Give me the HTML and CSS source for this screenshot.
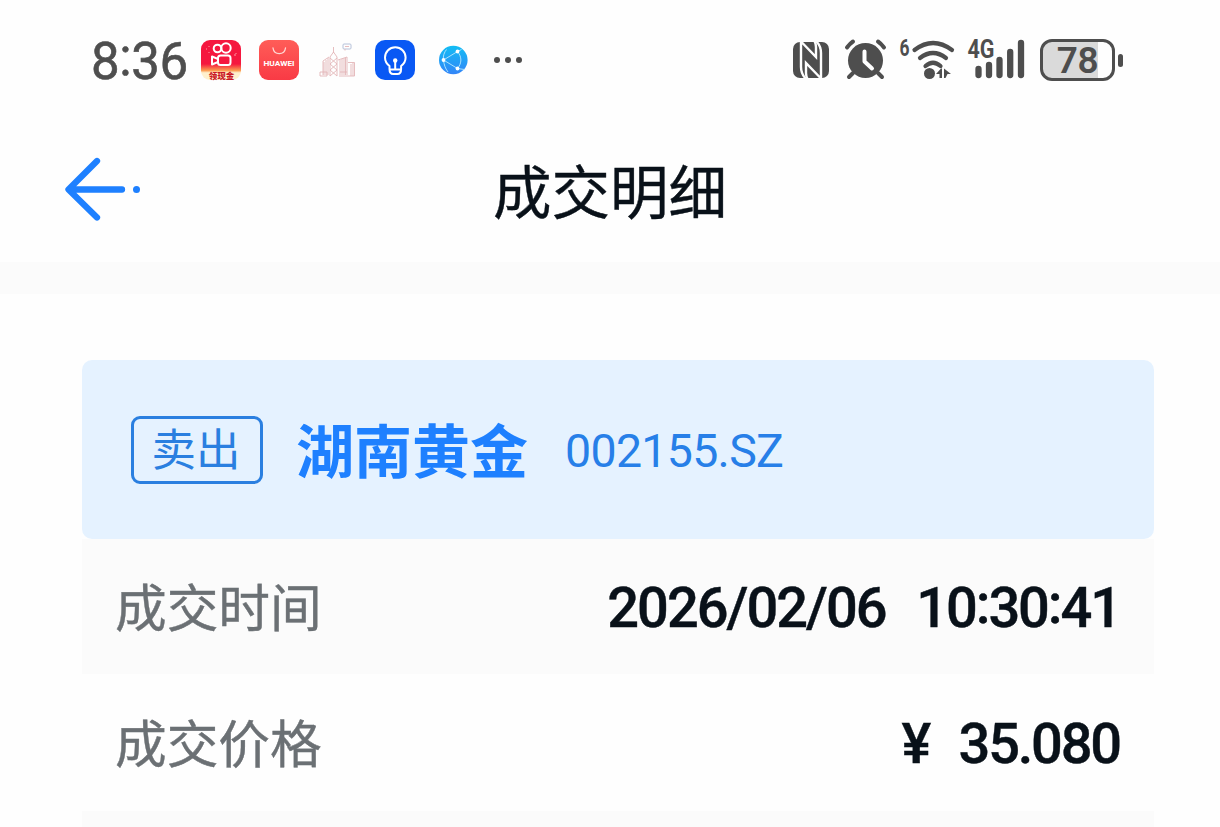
FILE: index.html
```html
<!DOCTYPE html>
<html lang="zh-CN">
<head>
    <meta charset="UTF-8">
    <meta name="viewport" content="width=device-width, initial-scale=1.0">
    <title>成交明细</title>
    <link rel="stylesheet" href="styles.css">
</head>
<body>
    <div class="status-bar">
        <div class="status-left">
            <span class="clock">8<i>:</i>36</span>
            <svg class="app-icon" viewBox="0 0 40 40">
                <defs>
                    <linearGradient id="kwai" x1="0" y1="0" x2="0" y2="1">
                        <stop offset="0.6" stop-color="#f5173f"/>
                        <stop offset="0.76" stop-color="#fb9a50"/>
                        <stop offset="0.82" stop-color="#fff0cd"/>
                    </linearGradient>
                </defs>
                <rect width="40" height="40" rx="9" fill="url(#kwai)"/>
                <g fill="none" stroke="#fff" stroke-width="2">
                    <circle cx="16.5" cy="8.5" r="3.8"/>
                    <circle cx="25" cy="8" r="4.7"/>
                    <rect x="17" y="15.5" width="12.5" height="9.5" rx="2.5"/>
                    <path d="M17 19l-6-2.5v8l6-2.5" stroke-linejoin="round"/>
                </g>
                <path d="M5 9h1M8 6v1M8 12v1M33 15h2M35 13v1" stroke="#ff9aa4" stroke-width="1"/>
                <text x="20.5" y="38.5" class="kwai-text">领现金</text>
            </svg>
            <svg class="app-icon" viewBox="0 0 40 40">
                <defs>
                    <linearGradient id="huawei" x1="0" y1="0" x2="0" y2="1">
                        <stop offset="0" stop-color="#ff5d58"/>
                        <stop offset="1" stop-color="#f93a45"/>
                    </linearGradient>
                </defs>
                <rect width="40" height="40" rx="9" fill="url(#huawei)"/>
                <path d="M14 8c1 7.5 11.5 7.5 12.5 0" fill="none" stroke="#ffd6d2" stroke-width="1.3" stroke-linecap="round"/>
                <text x="20" y="26" class="huawei-text" textLength="31" lengthAdjust="spacingAndGlyphs">HUAWEI</text>
            </svg>
            <svg class="app-icon" viewBox="0 0 40 40">
                <g transform="translate(3 0)" fill="none" stroke="#e3b5b8" stroke-width="0.9">
                    <path d="M13.5 7v6M10 36V17l3.500-5 3.500 5v19M10 18l7 6-7 6 7 6M17 18l-7 6 7 6-7 6"/>
                    <path d="M3 35V21l6-4M4 22v13M6 20v15M8 18v17M18 20l9-3v18M20 20v15M22 19v16M24 18v17M25.5 18v17"/>
                    <path d="M0 36h7v-4H0zM19 36h15.5V22.5H28M31 24v12M20 32h7M33 23v13"/>
                    <rect x="23" y="4" width="8" height="5" rx="1" stroke="#afbbd6"/>
                    <path d="M25 6.5h4M25 9v1.500"/>
                </g>
            </svg>
            <svg class="app-icon" viewBox="0 0 40 40">
                <rect width="40" height="40" rx="10" fill="#0958f4"/>
                <path d="M14.5 29v-3C11.5 23.700 10 20.800 10 17.500a10.300 10.300 0 0 1 20.600 0c0 3.300-1.500 6.200-4.500 8.500v3c0 3-1.500 5-3.700 5h-4.200c-2.200 0-3.700-2-3.700-5zM14.500 29.500h11.500M20.200 22v7" fill="none" stroke="#fff" stroke-width="2" stroke-linejoin="round" stroke-linecap="round"/>
                <circle cx="20.2" cy="20.5" r="2.2" fill="#fff"/>
            </svg>
            <svg class="app-icon" viewBox="0 0 40 40">
                <defs>
                    <linearGradient id="globe" x1="0" y1="0" x2="0" y2="1">
                        <stop offset="0" stop-color="#12bdf4"/>
                        <stop offset="1" stop-color="#3385f8"/>
                    </linearGradient>
                </defs>
                <circle cx="20.3" cy="20" r="14.3" fill="url(#globe)"/>
                <path d="M24.5 11.500L10.500 20l14 8.500M24.500 11.500c4.500 5.500 4.500 11.500 0 17M10.500 20c-.8-4 1-8 3-10.500M10.500 20c.5 4.500 1.500 8 4.500 12M24.500 11.500l4-2M24.500 28.500l7 1" fill="none" stroke="#a9e2ff" stroke-width="1"/>
                <g fill="#fff">
                    <circle cx="24.5" cy="11.5" r="1.9"/>
                    <circle cx="10.5" cy="20" r="1.9"/>
                    <circle cx="24.5" cy="28.5" r="1.9"/>
                </g>
            </svg>
            <svg class="more" viewBox="0 0 30 8">
                <circle cx="4" cy="4" r="3"/>
                <circle cx="15" cy="4" r="3"/>
                <circle cx="26" cy="4" r="3"/>
            </svg>
        </div>
        <div class="status-right">
            <svg class="nfc" viewBox="0 0 36 38">
                <rect y="1" width="36" height="36" rx="7"/>
                <g fill="none" stroke="#fefefe" stroke-width="2.4">
                    <path d="M8 0v26q0 7 5 12M8.500 1L23 16V6q0-3-1.500-6"/>
                    <path d="M28 38V12q0-7-5-12M27.500 37L13 22v10q0 3 1.500 6"/>
                </g>
            </svg>
            <svg class="alarm" viewBox="0 0 42 40">
                <circle cx="20.5" cy="20.5" r="17.5"/>
                <path d="M8 33l-4 4M33 33l4 4M2 7.500q3-4 6-6M33 1.500q3 2 6 6" fill="none" stroke="#4e4e4e" stroke-width="4" stroke-linecap="round"/>
                <path d="M19.5 11.500v10l7.500 7" fill="none" stroke="#fff" stroke-width="4" stroke-linecap="round" stroke-linejoin="round"/>
            </svg>
            <svg class="wifi" viewBox="0 0 55 44">
                <text x="0.5" y="18" class="wifi-text" textLength="10" lengthAdjust="spacingAndGlyphs">6</text>
                <path d="M15.500 12Q34 -2 53 12M21 20q13-10 26 0M26.500 28q7.500-6.500 15 0" fill="none" stroke="#4e4e4e" stroke-width="4.2" stroke-linecap="round"/>
                <circle cx="30.5" cy="35.5" r="5.5"/>
                <path d="M37 36l5-5.500h1V40h-2.500v-4zM45 30.500l7 5.500h-3.500l-2 4H45z"/>
            </svg>
            <svg class="signal" viewBox="0 0 58 42">
                <text x="0.5" y="19" class="signal-text" textLength="27" lengthAdjust="spacingAndGlyphs">4G</text>
                <path d="M11.500 30v6M22 26v10M32.500 21v15M43.200 13v23M54 4v32" fill="none" stroke="#4e4e4e" stroke-width="6.3" stroke-linecap="round"/>
            </svg>
            <div class="battery">
                <div class="battery-body"><span>78</span></div>
                <div class="battery-tip"></div>
            </div>
        </div>
    </div>

    <div class="header">
        <svg class="back" viewBox="0 0 80 66">
            <path d="M35 5L6.500 33.500l28.500 28M8 33.500h52" fill="none" stroke="#1e80ff" stroke-width="6.3" stroke-linecap="round" stroke-linejoin="round"/>
            <circle cx="74.5" cy="33.5" r="3.5" fill="#1e80ff"/>
        </svg>
        <h1>成交明细</h1>
    </div>
    <div class="divider"></div>

    <div class="detail">
        <div class="stock">
            <span class="tag">卖出</span>
            <span class="name">湖南黄金</span>
            <span class="code">002155.SZ</span>
        </div>
        <div class="row gray">
            <span class="label">成交时间</span>
            <span class="value">
                <span class="date">2026/02/06</span>
                <span class="time">10<i>:</i>30<i>:</i>41</span>
            </span>
        </div>
        <div class="row">
            <span class="label">成交价格</span>
            <span class="value">
                <span class="yen">¥</span>
                <span class="amount">35.080</span>
            </span>
        </div>
        <div class="row gray next"></div>
    </div>
</body>
</html>
```
FILE: styles.css
```css
* {
    box-sizing: border-box;
}

body {
    margin: 0;
    background-color: #fefefe;
    font-family: Roboto, "Noto Sans CJK SC", sans-serif;
    color: #091119;
}

svg {
    display: block;
    flex-shrink: 0;
    overflow: visible;
}

/* Status bar */
.status-bar {
    display: flex;
    justify-content: space-between;
    height: 120px;
    padding: 0 97px 0 91px;
    color: #4e4e4e;
    fill: #4e4e4e;
}

.status-left,
.status-right {
    display: flex;
    align-items: center;
    height: 120px;
}

.clock {
    width: 110px;
    font-size: 51px;
    line-height: 60px;
    letter-spacing: -0.4px;
    padding-top: 3px;
    -webkit-text-stroke: 0.6px #4e4e4e;
}

.clock i {
    position: relative;
    top: -4px;
    font-style: normal;
}

.app-icon {
    width: 40px;
    height: 40px;
    margin-right: 18px;
}

.kwai-text {
    font: 900 8.5px "Noto Sans CJK SC", sans-serif;
    text-anchor: middle;
    fill: #c91826;
}

.huawei-text {
    font: 700 7.5px Roboto, sans-serif;
    text-anchor: middle;
    fill: #fff;
}

.more {
    width: 30px;
    height: 8px;
    margin-left: 2px;
}

.nfc {
    width: 36px;
    height: 38px;
    margin-right: 16px;
    overflow: hidden;
}

.alarm {
    width: 42px;
    height: 40px;
    margin-right: 12px;
}

.wifi {
    width: 55px;
    height: 44px;
    margin-right: 13px;
}

.wifi-text {
    font: 700 23px Roboto, sans-serif;
}

.signal {
    width: 58px;
    height: 42px;
    margin-right: 15px;
}

.signal-text {
    font: 700 25px Roboto, sans-serif;
}

.battery {
    display: flex;
    align-items: center;
    gap: 3px;
}

.battery-body {
    width: 75px;
    height: 42px;
    border: 3px solid #4e4e4e;
    border-radius: 12px;
    background: linear-gradient(to right, #dadada 55px, #fefefe 55px);
    font-size: 37px;
    font-weight: 600;
    line-height: 38px;
    letter-spacing: -0.5px;
    text-align: center;
}

.battery-tip {
    width: 5px;
    height: 13px;
    border-radius: 3px;
    background-color: #4e4e4e;
}

/* Header */
.header {
    display: grid;
    grid-template-columns: 80px 1fr 80px;
    align-items: center;
    height: 142px;
    padding: 0 62px;
}

.back {
    width: 80px;
    height: 66px;
    margin-bottom: 4px;
}

.header h1 {
    margin: 0;
    padding-top: 5px;
    font-size: 58.5px;
    font-weight: 400;
    line-height: 80px;
    text-align: center;
    -webkit-text-stroke: 0.4px #091119;
}

.divider {
    height: 32px;
    background-color: #fbfbfb;
}

/* Detail */
.detail {
    margin: 66px 66px 0 82px;
}

.stock {
    display: flex;
    align-items: center;
    height: 179px;
    padding-left: 49px;
    border-radius: 10px;
    background-color: #e5f2ff;
    color: #1e80ff;
}

.tag {
    width: 132px;
    height: 68px;
    padding-right: 2px;
    border: 3px solid #2a7fe0;
    border-radius: 9px;
    color: #2a7fe0;
    font-size: 44.5px;
    line-height: 65px;
    text-align: center;
}

.name {
    margin-left: 33px;
    padding-top: 7px;
    font-size: 58px;
    font-weight: 700;
    line-height: 80px;
}

.code {
    margin-left: 37px;
    padding-top: 2px;
    color: #277fe8;
    font-size: 46.5px;
    letter-spacing: -0.7px;
}

.row {
    display: flex;
    justify-content: space-between;
    align-items: center;
    height: 137px;
    padding: 0 34px 0 33px;
}

.row.gray {
    height: 135px;
    background-color: #fbfbfb;
}

.row.next {
    height: 16px;
}

.label {
    padding-top: 7px;
    color: #6b7074;
    font-size: 51.7px;
    line-height: 70px;
    -webkit-text-stroke: 0.4px #6b7074;
}

.value {
    display: flex;
    font-size: 56px;
    font-weight: 500;
    line-height: 70px;
    padding-top: 3px;
    -webkit-text-stroke: 0.4px #091119;
}

.date {
    width: 309px;
    letter-spacing: -2px;
}

.time {
    letter-spacing: -2.1px;
}

.time i {
    position: relative;
    top: -4px;
    font-style: normal;
}

.yen {
    width: 57px;
}

.amount {
    letter-spacing: -2.2px;
}
```
